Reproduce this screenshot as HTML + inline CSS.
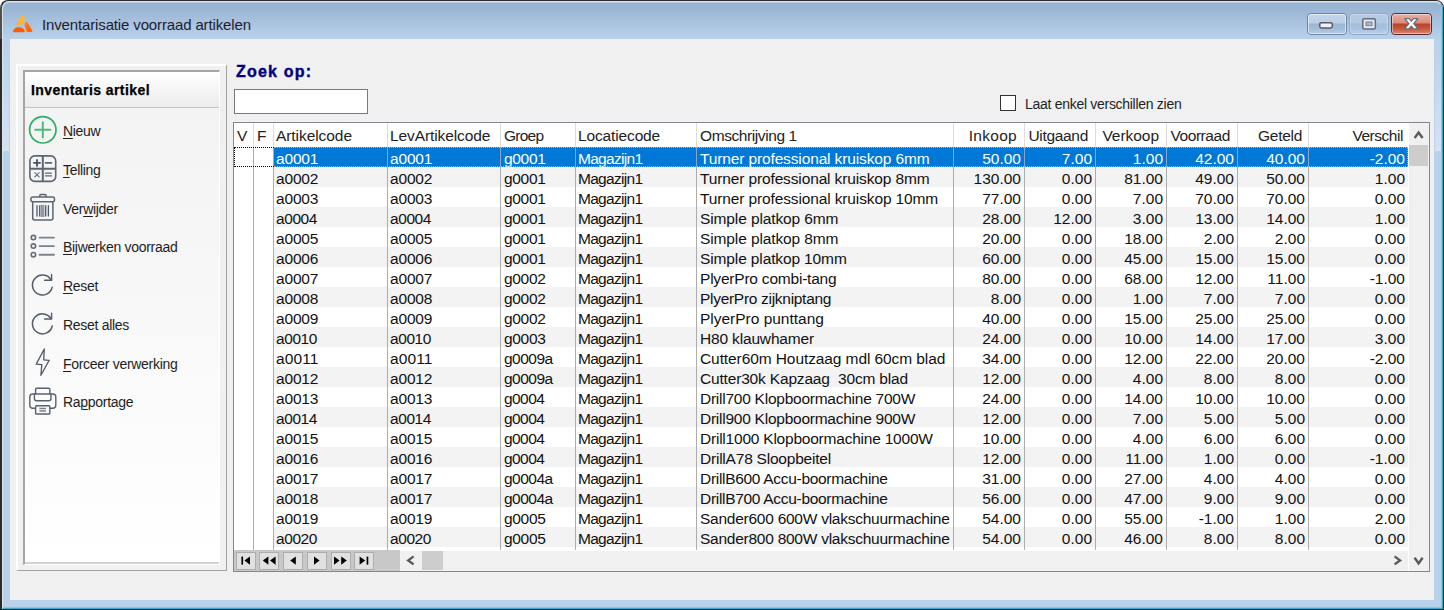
<!DOCTYPE html>
<html><head><meta charset="utf-8">
<style>
*{box-sizing:border-box;margin:0;padding:0}
html,body{width:1444px;height:610px;overflow:hidden;background:#fff;font-family:"Liberation Sans",sans-serif;}
.abs{position:absolute}
#win{position:absolute;left:0;top:0;width:1444px;height:610px;border-radius:8px 8px 0 0;background:linear-gradient(90deg,#505050 0,#505050 2px,#2b2b2b 2px) 0 0/100% 39px no-repeat,#2b2b2b;overflow:hidden}
#frame{position:absolute;left:2px;top:1px;width:1441px;height:608px;border-radius:7px 7px 0 0;background:#b9d1ea;overflow:hidden}
#cap{position:absolute;left:0;top:0;width:1441px;height:38px;background:linear-gradient(#98b3d2 0,#9cb7d6 25%,#b9d1ea 100%)}
#hl{position:absolute;left:0;top:0;width:1441px;height:608px;box-shadow:inset 0 1px 0 rgba(255,255,255,.3),inset -1px -1px 0 #7acdea;border:1px solid #dbe6f1;border-right-color:#3aa9c9;border-bottom-color:#3aa9c9;border-radius:7px 7px 0 0;}
#title{position:absolute;left:40px;top:15px;font-size:15px;line-height:17px;color:#1c1c30;white-space:nowrap;letter-spacing:-0.14px}
#client{position:absolute;left:8px;top:38px;width:1424px;height:561px;background:#f0f0f0}
/* left panel  (client origin = page 10,39) */
#lp{position:absolute;left:6px;top:25px;width:211px;height:507px;border:2px solid #fff;border-right:1px solid #a0a0a0;border-bottom:1px solid #a0a0a0}
#lpi{position:absolute;left:13px;top:31px;width:197px;height:495px;border-top:2px solid #a6a6a6;border-left:2px solid #a6a6a6;border-right:1px solid #fff;border-bottom:1px solid #fff;background:linear-gradient(#f2f2f2 0,#fff 100%)}
#lpi:after{content:"";position:absolute;left:0;right:0;bottom:0;height:2px;background:#d2d2d2}
#lph{position:absolute;left:0;top:0;right:0;height:36px;background:linear-gradient(#fff,#ebebeb);border-bottom:1px solid #c4c4c4;font-weight:bold;font-size:14px;line-height:16px;padding:10px 0 0 6px;color:#000;white-space:nowrap;letter-spacing:0.43px;-webkit-text-stroke:0.25px #000}
.mi{position:absolute;left:40px;font-size:14px;line-height:16px;color:#1e1e1e;white-space:nowrap;letter-spacing:-0.3px}
u{text-decoration:underline;text-decoration-thickness:1px;text-underline-offset:1.5px}
/* search */
#zoek{position:absolute;left:226px;top:24px;-webkit-text-stroke:0.4px #000080;font-weight:bold;font-size:16px;line-height:18px;color:#000080;letter-spacing:1.2px;white-space:nowrap}
#inp{position:absolute;left:224px;top:50px;width:134px;height:25px;border:1px solid #7a7a7a;background:#fff}
#cb{position:absolute;left:990px;top:56px;width:16px;height:16px;border:1px solid #333;background:#fff}
#cbl{position:absolute;left:1015px;top:57px;font-size:14px;line-height:16px;color:#1e1e1e;white-space:nowrap;letter-spacing:-0.29px}
/* grid: page (233,122) -> client (223,83) */
#grid{position:absolute;left:223px;top:83px;width:1197px;height:450px;border:1px solid #828790;background:#fff;overflow:hidden}
#gi{position:absolute;left:-1px;top:-1px;width:1197px;height:450px}
.hc{position:absolute;top:1px;height:24px;font-size:15.5px;line-height:25px;padding:0 0 0 3px;color:#222;white-space:nowrap;overflow:hidden}
.hc.r{text-align:right;padding:0 7px 0 0}
.row{position:absolute;left:41px;width:1134px;height:20px;background:#fff}
.row.alt{background:#f3f3f3}
.row.sel{background:#0078d7}
.row.sel .c{color:#fff}
.c{position:absolute;top:0;height:20px;line-height:23px;font-size:15.5px;padding:0 0 0 3px;color:#111;white-space:nowrap;overflow:hidden}
.c.r{text-align:right;padding:0 3px 0 0}
.vl{position:absolute;top:25px;width:1px;height:403px;background:#adadad}
.vh{position:absolute;top:1px;width:1px;height:24px;background:#dcdcdc}
.vs{position:absolute;top:25px;width:1px;height:20px;background:#86a8c8}
</style></head><body>
<div id="win"><div id="frame">
<div id="cap"></div>
<div id="hl"></div>
<div class="abs" style="left:1px;top:38px;width:6px;height:112px;background:linear-gradient(#b9d1ea,#d4e3f3)"></div>
<div class="abs" style="left:1433px;top:38px;width:6px;height:112px;background:linear-gradient(#b9d1ea,#d4e3f3)"></div>
<svg class="abs" style="left:0;top:0" width="40" height="38" viewBox="2 1 40 38">
 <defs>
  <linearGradient id="gy" x1="0" y1="0" x2="0" y2="1"><stop offset="0" stop-color="#fdbb33"/><stop offset="1" stop-color="#fdb02e"/></linearGradient>
  <linearGradient id="go" x1="0" y1="0" x2="1" y2="1"><stop offset="0" stop-color="#ff8a3c"/><stop offset="0.5" stop-color="#ff6a05"/><stop offset="1" stop-color="#ff6a05"/></linearGradient>
 </defs>
 <path d="M21.2 16.2Q22.6 14.6 24 16L24.9 18.6L22.9 24.1Q20 25.6 16.9 25.1Q16.2 24.6 16.6 23.8Z" fill="url(#gy)"/>
 <path d="M24.4 24.4Q24.6 22.2 26.2 21.8Q27 21.8 27.6 22.8L32.4 30.6Q32.6 31.8 31.4 32H27.6Q26.6 31.8 26.2 30.8Z" fill="url(#go)"/>
 <path d="M13 31.2Q13.6 28.2 17.4 27.3Q21.8 26.6 24 29.2L24.9 31.2Q25 32.2 24 32.2H13.8Q12.8 32.2 13 31.2Z" fill="#ff5c02"/>
</svg>

<div id="title">Inventarisatie voorraad artikelen</div>
<style>
.cb{position:absolute;top:12px;height:22px;border-radius:4px;border:1px solid #6f85a3;}
.cb i{position:absolute;left:0;top:0;right:0;bottom:0;border-radius:3px;border:1px solid rgba(255,255,255,.55)}
#bmin{left:1305px;width:40px;background:linear-gradient(#c3d5e9 0,#bccfe6 45%,#9bb5d2 50%,#a3bcd9 75%,#b6cde7 100%)}
#bmax{left:1347px;width:40px;border-color:#90a8c6;background:linear-gradient(#b6cbe4 0,#b2c8e2 45%,#a3bddb 50%,#a9c2df 75%,#b7cfe9 100%)}
#bmax i{border-color:rgba(255,255,255,.28)}
#bcls{left:1389px;width:41px;border-color:#5a2832;background:linear-gradient(#eab0a3 0,#d98b7a 45%,#bf4228 50%,#c4523a 70%,#d98670 100%)}
#bcls i{border-color:rgba(255,255,255,.45)}
</style>
<div class="cb" id="bmin"><i></i><svg class="abs" style="left:11px;top:8px" width="16" height="8"><rect x="0.75" y="0.75" width="12.5" height="5.2" rx="1.6" fill="#f2f2f2" stroke="#535b6e" stroke-width="1.5"/></svg></div>
<div class="cb" id="bmax"><i></i><svg class="abs" style="left:12px;top:4px" width="16" height="14"><rect x="0.75" y="0.75" width="12.6" height="10.2" rx="1.5" fill="#e6e6e6" stroke="#626b80" stroke-width="1.5"/><rect x="4" y="4" width="6" height="3.6" fill="#9fb7d6" stroke="#7a849a" stroke-width="1"/></svg></div>
<div class="cb" id="bcls"><i></i><svg class="abs" style="left:11px;top:3px" width="18" height="14" viewBox="0 0 18 14"><path d="M1.8 1.6H6.2L8.3 4.2L10.4 1.6H14.8L10.7 6.6L15 11.9H10.6L8.3 9.1L6 11.9H1.6L5.9 6.6Z" fill="#fff" stroke="#6a6f7c" stroke-width="1.3" stroke-linejoin="round"/></svg></div>

<div id="client">
 <div id="lp"></div>
 <div id="lpi">
   <div id="lph">Inventaris artikel</div>
 </div>
<svg class="abs" style="left:0;top:0" width="230" height="450" viewBox="10 39 230 450" fill="none" stroke-linecap="round" stroke-linejoin="round">
 <!-- Nieuw -->
 <g stroke="#2fae66">
  <circle cx="42.8" cy="129.8" r="13.2" stroke-width="1.7"/>
  <path d="M35.2 129.8H50.4M42.8 122.2V137.4" stroke-width="2" stroke="#4dba7e"/>
 </g>
 <!-- Telling -->
 <g stroke="#5c6573" stroke-width="1.6">
  <rect x="29.9" y="155.9" width="25.8" height="25.5" rx="5"/>
  <path d="M42.8 156V181.2M30 168.7H55.6" stroke-width="2" stroke-linecap="butt"/>
  <path d="M34 162.9H40M37 159.9V165.9" stroke-width="1.8" stroke="#4a5260"/>
  <path d="M45.5 162.9H51.5" stroke-width="1.6"/>
  <path d="M34.8 172.6L39.2 177M39.2 172.6L34.8 177" stroke-width="1.1" stroke="#6d7582"/>
  <path d="M45.5 173.1H51.5M45.5 175.9H51.5" stroke-width="1.4"/>
 </g>
 <!-- Verwijder -->
 <g stroke="#5c6573" stroke-width="1.5">
  <path d="M39.8 196.5V195.5Q39.8 194.5 40.8 194.5H45Q46 194.5 46 195.5V196.5"/>
  <rect x="30.9" y="196.9" width="23.6" height="4.8" rx="2"/>
  <path d="M32.7 202V218Q32.7 220 34.7 220H50.9Q52.9 220 52.9 218V202"/>
  <path d="M37 205.2V216.6M39.7 205.2V216.6M45.7 205.2V216.6M48.4 205.2V216.6" stroke-width="1.3" stroke="#4f5866" stroke-linecap="butt"/>
  <rect x="40.6" y="204.8" width="3.8" height="12.2" fill="#949aa3" stroke="none"/>
 </g>
 <!-- Bijwerken -->
 <g stroke="#656d7a" stroke-width="1.6">
  <circle cx="33.4" cy="237.6" r="2.2"/><circle cx="33.4" cy="246.1" r="2.2"/><circle cx="33.4" cy="254.7" r="2.2"/>
  <path d="M39.6 237.6H54M39.6 246.1H54M39.6 254.7H54" stroke-width="1.9" stroke="#7a828e"/>
 </g>
 <!-- Reset -->
 <g stroke="#535c6a" stroke-width="1.5">
  <path d="M51 279.9A10 10 0 1 0 52.2 287.2"/>
  <path d="M51.6 274.4V280.2H44.6" stroke-width="1.4"/>
 </g>
 <g stroke="#535c6a" stroke-width="1.5" transform="translate(0 38.8)">
  <path d="M51 279.9A10 10 0 1 0 52.2 287.2"/>
  <path d="M51.6 274.4V280.2H44.6" stroke-width="1.4"/>
 </g>
 <!-- Forceer -->
 <path d="M44.3 349L36.2 364.1L41.8 364.6L40.9 375.3L49.2 360.3L43.7 359.8Z" stroke="#4f5866" stroke-width="1.3"/>
 <!-- Rapportage -->
 <g stroke="#596270" stroke-width="1.4">
  <path d="M35.6 393.8V389.2Q35.6 388.2 36.6 388.2H48.8Q49.8 388.2 49.8 389.2V393.8"/>
  <path d="M35.2 408.2H32.8Q29.8 408.2 29.8 405.2V397Q29.8 394 32.8 394H52.8Q55.8 394 55.8 397V405.2Q55.8 408.2 52.8 408.2H50.2"/>
  <path d="M34.4 394V398.6Q34.4 400.8 36.6 400.8H48.8Q51 400.8 51 398.6V394"/>
  <rect x="35.6" y="405.8" width="14.2" height="8.2" rx="0.8"/>
  <path d="M39.4 408.4H46M39.4 411H46" stroke-width="1.5" stroke="#7a828e" stroke-linecap="butt"/>
 </g>
</svg>
<div class="mi" style="left:53px;top:84px"><u>N</u>ieuw</div>
<div class="mi" style="left:53px;top:123px"><u>T</u>elling</div>
<div class="mi" style="left:53px;top:162px">Ver<u>w</u>ijder</div>
<div class="mi" style="left:53px;top:200px"><u>B</u>ijwerken voorraad</div>
<div class="mi" style="left:53px;top:239px"><u>R</u>eset</div>
<div class="mi" style="left:53px;top:278px">Reset alles</div>
<div class="mi" style="left:53px;top:317px"><u>F</u>orceer verwerking</div>
<div class="mi" style="left:53px;top:355px">Ra<u>p</u>portage</div>

 <div id="zoek">Zoek op:</div>
 <div id="inp"></div>
 <div id="cb"></div><div id="cbl">Laat enkel verschillen zien</div>
 <div id="grid"><div id="gi">
<div class="hc" style="left:1px;width:19px">V</div>
<div class="hc" style="left:21px;width:19px">F</div>
<div class="hc l" style="left:41px;width:113px;letter-spacing:-0.065px;padding-left:2px">Artikelcode</div>
<div class="hc l" style="left:155px;width:112px;letter-spacing:-0.103px;padding-left:2px">LevArtikelcode</div>
<div class="hc l" style="left:268px;width:74px;letter-spacing:-0.765px">Groep</div>
<div class="hc l" style="left:343px;width:120px;letter-spacing:-0.137px;padding-left:2px">Locatiecode</div>
<div class="hc l" style="left:464px;width:256px;letter-spacing:-0.414px">Omschrijving 1</div>
<div class="hc r" style="left:721px;width:70px;letter-spacing:0.297px">Inkoop</div>
<div class="hc r" style="left:792px;width:70px;letter-spacing:-0.304px">Uitgaand</div>
<div class="hc r" style="left:863px;width:70px;letter-spacing:-0.043px">Verkoop</div>
<div class="hc r" style="left:934px;width:70px;letter-spacing:-0.413px">Voorraad</div>
<div class="hc r" style="left:1005px;width:70px;padding-right:6px;letter-spacing:-0.289px">Geteld</div>
<div class="hc r" style="left:1076px;width:99px;padding-right:5px;letter-spacing:-0.461px">Verschil</div>
<div class="row sel" style="top:25px"><div class="c l" style="left:0px;width:113px;letter-spacing:-0.17px;padding-left:2px">a0001</div><div class="c l" style="left:114px;width:112px;letter-spacing:-0.17px;padding-left:2px">a0001</div><div class="c l" style="left:227px;width:74px;letter-spacing:-0.32px">g0001</div><div class="c l" style="left:302px;width:120px;letter-spacing:-0.704px;padding-left:2px">Magazijn1</div><div class="c l" style="left:423px;width:256px;letter-spacing:-0.133px">Turner professional kruiskop 6mm</div><div class="c r" style="left:680px;width:70px">50.00</div><div class="c r" style="left:751px;width:70px">7.00</div><div class="c r" style="left:822px;width:70px">1.00</div><div class="c r" style="left:893px;width:70px">42.00</div><div class="c r" style="left:964px;width:70px">40.00</div><div class="c r" style="left:1035px;width:99px">-2.00</div></div>
<div class="row alt" style="top:45px"><div class="c l" style="left:0px;width:113px;letter-spacing:-0.17px;padding-left:2px">a0002</div><div class="c l" style="left:114px;width:112px;letter-spacing:-0.17px;padding-left:2px">a0002</div><div class="c l" style="left:227px;width:74px;letter-spacing:-0.32px">g0001</div><div class="c l" style="left:302px;width:120px;letter-spacing:-0.704px;padding-left:2px">Magazijn1</div><div class="c l" style="left:423px;width:256px;letter-spacing:-0.133px">Turner professional kruiskop 8mm</div><div class="c r" style="left:680px;width:70px">130.00</div><div class="c r" style="left:751px;width:70px">0.00</div><div class="c r" style="left:822px;width:70px">81.00</div><div class="c r" style="left:893px;width:70px">49.00</div><div class="c r" style="left:964px;width:70px">50.00</div><div class="c r" style="left:1035px;width:99px">1.00</div></div>
<div class="row" style="top:65px"><div class="c l" style="left:0px;width:113px;letter-spacing:-0.17px;padding-left:2px">a0003</div><div class="c l" style="left:114px;width:112px;letter-spacing:-0.17px;padding-left:2px">a0003</div><div class="c l" style="left:227px;width:74px;letter-spacing:-0.32px">g0001</div><div class="c l" style="left:302px;width:120px;letter-spacing:-0.704px;padding-left:2px">Magazijn1</div><div class="c l" style="left:423px;width:256px;letter-spacing:-0.129px">Turner professional kruiskop 10mm</div><div class="c r" style="left:680px;width:70px">77.00</div><div class="c r" style="left:751px;width:70px">0.00</div><div class="c r" style="left:822px;width:70px">7.00</div><div class="c r" style="left:893px;width:70px">70.00</div><div class="c r" style="left:964px;width:70px">70.00</div><div class="c r" style="left:1035px;width:99px">0.00</div></div>
<div class="row alt" style="top:85px"><div class="c l" style="left:0px;width:113px;letter-spacing:-0.42px;padding-left:2px">a0004</div><div class="c l" style="left:114px;width:112px;letter-spacing:-0.42px;padding-left:2px">a0004</div><div class="c l" style="left:227px;width:74px;letter-spacing:-0.32px">g0001</div><div class="c l" style="left:302px;width:120px;letter-spacing:-0.704px;padding-left:2px">Magazijn1</div><div class="c l" style="left:423px;width:256px;letter-spacing:-0.112px">Simple platkop 6mm</div><div class="c r" style="left:680px;width:70px">28.00</div><div class="c r" style="left:751px;width:70px">12.00</div><div class="c r" style="left:822px;width:70px">3.00</div><div class="c r" style="left:893px;width:70px">13.00</div><div class="c r" style="left:964px;width:70px">14.00</div><div class="c r" style="left:1035px;width:99px">1.00</div></div>
<div class="row" style="top:105px"><div class="c l" style="left:0px;width:113px;letter-spacing:-0.17px;padding-left:2px">a0005</div><div class="c l" style="left:114px;width:112px;letter-spacing:-0.17px;padding-left:2px">a0005</div><div class="c l" style="left:227px;width:74px;letter-spacing:-0.32px">g0001</div><div class="c l" style="left:302px;width:120px;letter-spacing:-0.704px;padding-left:2px">Magazijn1</div><div class="c l" style="left:423px;width:256px;letter-spacing:-0.112px">Simple platkop 8mm</div><div class="c r" style="left:680px;width:70px">20.00</div><div class="c r" style="left:751px;width:70px">0.00</div><div class="c r" style="left:822px;width:70px">18.00</div><div class="c r" style="left:893px;width:70px">2.00</div><div class="c r" style="left:964px;width:70px">2.00</div><div class="c r" style="left:1035px;width:99px">0.00</div></div>
<div class="row alt" style="top:125px"><div class="c l" style="left:0px;width:113px;letter-spacing:-0.17px;padding-left:2px">a0006</div><div class="c l" style="left:114px;width:112px;letter-spacing:-0.17px;padding-left:2px">a0006</div><div class="c l" style="left:227px;width:74px;letter-spacing:-0.32px">g0001</div><div class="c l" style="left:302px;width:120px;letter-spacing:-0.704px;padding-left:2px">Magazijn1</div><div class="c l" style="left:423px;width:256px;letter-spacing:-0.124px">Simple platkop 10mm</div><div class="c r" style="left:680px;width:70px">60.00</div><div class="c r" style="left:751px;width:70px">0.00</div><div class="c r" style="left:822px;width:70px">45.00</div><div class="c r" style="left:893px;width:70px">15.00</div><div class="c r" style="left:964px;width:70px">15.00</div><div class="c r" style="left:1035px;width:99px">0.00</div></div>
<div class="row" style="top:145px"><div class="c l" style="left:0px;width:113px;letter-spacing:-0.17px;padding-left:2px">a0007</div><div class="c l" style="left:114px;width:112px;letter-spacing:-0.17px;padding-left:2px">a0007</div><div class="c l" style="left:227px;width:74px;letter-spacing:-0.32px">g0002</div><div class="c l" style="left:302px;width:120px;letter-spacing:-0.704px;padding-left:2px">Magazijn1</div><div class="c l" style="left:423px;width:256px;letter-spacing:-0.211px">PlyerPro combi-tang</div><div class="c r" style="left:680px;width:70px">80.00</div><div class="c r" style="left:751px;width:70px">0.00</div><div class="c r" style="left:822px;width:70px">68.00</div><div class="c r" style="left:893px;width:70px">12.00</div><div class="c r" style="left:964px;width:70px">11.00</div><div class="c r" style="left:1035px;width:99px">-1.00</div></div>
<div class="row alt" style="top:165px"><div class="c l" style="left:0px;width:113px;letter-spacing:-0.17px;padding-left:2px">a0008</div><div class="c l" style="left:114px;width:112px;letter-spacing:-0.17px;padding-left:2px">a0008</div><div class="c l" style="left:227px;width:74px;letter-spacing:-0.32px">g0002</div><div class="c l" style="left:302px;width:120px;letter-spacing:-0.704px;padding-left:2px">Magazijn1</div><div class="c l" style="left:423px;width:256px;letter-spacing:-0.293px">PlyerPro zijkniptang</div><div class="c r" style="left:680px;width:70px">8.00</div><div class="c r" style="left:751px;width:70px">0.00</div><div class="c r" style="left:822px;width:70px">1.00</div><div class="c r" style="left:893px;width:70px">7.00</div><div class="c r" style="left:964px;width:70px">7.00</div><div class="c r" style="left:1035px;width:99px">0.00</div></div>
<div class="row" style="top:185px"><div class="c l" style="left:0px;width:113px;letter-spacing:-0.17px;padding-left:2px">a0009</div><div class="c l" style="left:114px;width:112px;letter-spacing:-0.17px;padding-left:2px">a0009</div><div class="c l" style="left:227px;width:74px;letter-spacing:-0.32px">g0002</div><div class="c l" style="left:302px;width:120px;letter-spacing:-0.704px;padding-left:2px">Magazijn1</div><div class="c l" style="left:423px;width:256px;letter-spacing:-0.01px">PlyerPro punttang</div><div class="c r" style="left:680px;width:70px">40.00</div><div class="c r" style="left:751px;width:70px">0.00</div><div class="c r" style="left:822px;width:70px">15.00</div><div class="c r" style="left:893px;width:70px">25.00</div><div class="c r" style="left:964px;width:70px">25.00</div><div class="c r" style="left:1035px;width:99px">0.00</div></div>
<div class="row alt" style="top:205px"><div class="c l" style="left:0px;width:113px;letter-spacing:-0.42px;padding-left:2px">a0010</div><div class="c l" style="left:114px;width:112px;letter-spacing:-0.42px;padding-left:2px">a0010</div><div class="c l" style="left:227px;width:74px;letter-spacing:-0.32px">g0003</div><div class="c l" style="left:302px;width:120px;letter-spacing:-0.704px;padding-left:2px">Magazijn1</div><div class="c l" style="left:423px;width:256px;letter-spacing:-0.165px">H80 klauwhamer</div><div class="c r" style="left:680px;width:70px">24.00</div><div class="c r" style="left:751px;width:70px">0.00</div><div class="c r" style="left:822px;width:70px">10.00</div><div class="c r" style="left:893px;width:70px">14.00</div><div class="c r" style="left:964px;width:70px">17.00</div><div class="c r" style="left:1035px;width:99px">3.00</div></div>
<div class="row" style="top:225px"><div class="c l" style="left:0px;width:113px;letter-spacing:0.117px;padding-left:2px">a0011</div><div class="c l" style="left:114px;width:112px;letter-spacing:0.117px;padding-left:2px">a0011</div><div class="c l" style="left:227px;width:74px;letter-spacing:-0.52px">g0009a</div><div class="c l" style="left:302px;width:120px;letter-spacing:-0.704px;padding-left:2px">Magazijn1</div><div class="c l" style="left:423px;width:256px;letter-spacing:-0.09px">Cutter60m Houtzaag mdl 60cm blad</div><div class="c r" style="left:680px;width:70px">34.00</div><div class="c r" style="left:751px;width:70px">0.00</div><div class="c r" style="left:822px;width:70px">12.00</div><div class="c r" style="left:893px;width:70px">22.00</div><div class="c r" style="left:964px;width:70px">20.00</div><div class="c r" style="left:1035px;width:99px">-2.00</div></div>
<div class="row alt" style="top:245px"><div class="c l" style="left:0px;width:113px;letter-spacing:-0.17px;padding-left:2px">a0012</div><div class="c l" style="left:114px;width:112px;letter-spacing:-0.17px;padding-left:2px">a0012</div><div class="c l" style="left:227px;width:74px;letter-spacing:-0.52px">g0009a</div><div class="c l" style="left:302px;width:120px;letter-spacing:-0.704px;padding-left:2px">Magazijn1</div><div class="c l" style="left:423px;width:256px;letter-spacing:-0.174px">Cutter30k Kapzaag&nbsp; 30cm blad</div><div class="c r" style="left:680px;width:70px">12.00</div><div class="c r" style="left:751px;width:70px">0.00</div><div class="c r" style="left:822px;width:70px">4.00</div><div class="c r" style="left:893px;width:70px">8.00</div><div class="c r" style="left:964px;width:70px">8.00</div><div class="c r" style="left:1035px;width:99px">0.00</div></div>
<div class="row" style="top:265px"><div class="c l" style="left:0px;width:113px;letter-spacing:-0.17px;padding-left:2px">a0013</div><div class="c l" style="left:114px;width:112px;letter-spacing:-0.17px;padding-left:2px">a0013</div><div class="c l" style="left:227px;width:74px;letter-spacing:-0.57px">g0004</div><div class="c l" style="left:302px;width:120px;letter-spacing:-0.704px;padding-left:2px">Magazijn1</div><div class="c l" style="left:423px;width:256px;letter-spacing:-0.248px">Drill700 Klopboormachine 700W</div><div class="c r" style="left:680px;width:70px">24.00</div><div class="c r" style="left:751px;width:70px">0.00</div><div class="c r" style="left:822px;width:70px">14.00</div><div class="c r" style="left:893px;width:70px">10.00</div><div class="c r" style="left:964px;width:70px">10.00</div><div class="c r" style="left:1035px;width:99px">0.00</div></div>
<div class="row alt" style="top:285px"><div class="c l" style="left:0px;width:113px;letter-spacing:-0.42px;padding-left:2px">a0014</div><div class="c l" style="left:114px;width:112px;letter-spacing:-0.42px;padding-left:2px">a0014</div><div class="c l" style="left:227px;width:74px;letter-spacing:-0.57px">g0004</div><div class="c l" style="left:302px;width:120px;letter-spacing:-0.704px;padding-left:2px">Magazijn1</div><div class="c l" style="left:423px;width:256px;letter-spacing:-0.248px">Drill900 Klopboormachine 900W</div><div class="c r" style="left:680px;width:70px">12.00</div><div class="c r" style="left:751px;width:70px">0.00</div><div class="c r" style="left:822px;width:70px">7.00</div><div class="c r" style="left:893px;width:70px">5.00</div><div class="c r" style="left:964px;width:70px">5.00</div><div class="c r" style="left:1035px;width:99px">0.00</div></div>
<div class="row" style="top:305px"><div class="c l" style="left:0px;width:113px;letter-spacing:-0.17px;padding-left:2px">a0015</div><div class="c l" style="left:114px;width:112px;letter-spacing:-0.17px;padding-left:2px">a0015</div><div class="c l" style="left:227px;width:74px;letter-spacing:-0.57px">g0004</div><div class="c l" style="left:302px;width:120px;letter-spacing:-0.704px;padding-left:2px">Magazijn1</div><div class="c l" style="left:423px;width:256px;letter-spacing:-0.22px">Drill1000 Klopboormachine 1000W</div><div class="c r" style="left:680px;width:70px">10.00</div><div class="c r" style="left:751px;width:70px">0.00</div><div class="c r" style="left:822px;width:70px">4.00</div><div class="c r" style="left:893px;width:70px">6.00</div><div class="c r" style="left:964px;width:70px">6.00</div><div class="c r" style="left:1035px;width:99px">0.00</div></div>
<div class="row alt" style="top:325px"><div class="c l" style="left:0px;width:113px;letter-spacing:-0.17px;padding-left:2px">a0016</div><div class="c l" style="left:114px;width:112px;letter-spacing:-0.17px;padding-left:2px">a0016</div><div class="c l" style="left:227px;width:74px;letter-spacing:-0.57px">g0004</div><div class="c l" style="left:302px;width:120px;letter-spacing:-0.704px;padding-left:2px">Magazijn1</div><div class="c l" style="left:423px;width:256px;letter-spacing:-0.217px">DrillA78 Sloopbeitel</div><div class="c r" style="left:680px;width:70px">12.00</div><div class="c r" style="left:751px;width:70px">0.00</div><div class="c r" style="left:822px;width:70px">11.00</div><div class="c r" style="left:893px;width:70px">1.00</div><div class="c r" style="left:964px;width:70px">0.00</div><div class="c r" style="left:1035px;width:99px">-1.00</div></div>
<div class="row" style="top:345px"><div class="c l" style="left:0px;width:113px;letter-spacing:-0.17px;padding-left:2px">a0017</div><div class="c l" style="left:114px;width:112px;letter-spacing:-0.17px;padding-left:2px">a0017</div><div class="c l" style="left:227px;width:74px;letter-spacing:-0.52px">g0004a</div><div class="c l" style="left:302px;width:120px;letter-spacing:-0.704px;padding-left:2px">Magazijn1</div><div class="c l" style="left:423px;width:256px;letter-spacing:-0.304px">DrillB600 Accu-boormachine</div><div class="c r" style="left:680px;width:70px">31.00</div><div class="c r" style="left:751px;width:70px">0.00</div><div class="c r" style="left:822px;width:70px">27.00</div><div class="c r" style="left:893px;width:70px">4.00</div><div class="c r" style="left:964px;width:70px">4.00</div><div class="c r" style="left:1035px;width:99px">0.00</div></div>
<div class="row alt" style="top:365px"><div class="c l" style="left:0px;width:113px;letter-spacing:-0.17px;padding-left:2px">a0018</div><div class="c l" style="left:114px;width:112px;letter-spacing:-0.17px;padding-left:2px">a0017</div><div class="c l" style="left:227px;width:74px;letter-spacing:-0.52px">g0004a</div><div class="c l" style="left:302px;width:120px;letter-spacing:-0.704px;padding-left:2px">Magazijn1</div><div class="c l" style="left:423px;width:256px;letter-spacing:-0.304px">DrillB700 Accu-boormachine</div><div class="c r" style="left:680px;width:70px">56.00</div><div class="c r" style="left:751px;width:70px">0.00</div><div class="c r" style="left:822px;width:70px">47.00</div><div class="c r" style="left:893px;width:70px">9.00</div><div class="c r" style="left:964px;width:70px">9.00</div><div class="c r" style="left:1035px;width:99px">0.00</div></div>
<div class="row" style="top:385px"><div class="c l" style="left:0px;width:113px;letter-spacing:-0.17px;padding-left:2px">a0019</div><div class="c l" style="left:114px;width:112px;letter-spacing:-0.17px;padding-left:2px">a0019</div><div class="c l" style="left:227px;width:74px;letter-spacing:-0.32px">g0005</div><div class="c l" style="left:302px;width:120px;letter-spacing:-0.704px;padding-left:2px">Magazijn1</div><div class="c l" style="left:423px;width:256px;letter-spacing:-0.252px">Sander600 600W vlakschuurmachine</div><div class="c r" style="left:680px;width:70px">54.00</div><div class="c r" style="left:751px;width:70px">0.00</div><div class="c r" style="left:822px;width:70px">55.00</div><div class="c r" style="left:893px;width:70px">-1.00</div><div class="c r" style="left:964px;width:70px">1.00</div><div class="c r" style="left:1035px;width:99px">2.00</div></div>
<div class="row alt" style="top:405px"><div class="c l" style="left:0px;width:113px;letter-spacing:-0.42px;padding-left:2px">a0020</div><div class="c l" style="left:114px;width:112px;letter-spacing:-0.42px;padding-left:2px">a0020</div><div class="c l" style="left:227px;width:74px;letter-spacing:-0.32px">g0005</div><div class="c l" style="left:302px;width:120px;letter-spacing:-0.704px;padding-left:2px">Magazijn1</div><div class="c l" style="left:423px;width:256px;letter-spacing:-0.252px">Sander800 800W vlakschuurmachine</div><div class="c r" style="left:680px;width:70px">54.00</div><div class="c r" style="left:751px;width:70px">0.00</div><div class="c r" style="left:822px;width:70px">46.00</div><div class="c r" style="left:893px;width:70px">8.00</div><div class="c r" style="left:964px;width:70px">8.00</div><div class="c r" style="left:1035px;width:99px">0.00</div></div>
<div class="vl" style="left:20px"></div><div class="vh" style="left:20px"></div>
<div class="vl" style="left:40px"></div><div class="vh" style="left:40px"></div>
<div class="vl" style="left:154px"></div><div class="vh" style="left:154px"></div>
<div class="vl" style="left:267px"></div><div class="vh" style="left:267px"></div>
<div class="vl" style="left:342px"></div><div class="vh" style="left:342px"></div>
<div class="vl" style="left:463px"></div><div class="vh" style="left:463px"></div>
<div class="vl" style="left:720px"></div><div class="vh" style="left:720px"></div>
<div class="vl" style="left:791px"></div><div class="vh" style="left:791px"></div>
<div class="vl" style="left:862px"></div><div class="vh" style="left:862px"></div>
<div class="vl" style="left:933px"></div><div class="vh" style="left:933px"></div>
<div class="vl" style="left:1004px"></div><div class="vh" style="left:1004px"></div>
<div class="vl" style="left:1075px"></div><div class="vh" style="left:1075px"></div>
<div class="vs" style="left:154px"></div>
<div class="vs" style="left:267px"></div>
<div class="vs" style="left:342px"></div>
<div class="vs" style="left:463px"></div>
<div class="vs" style="left:720px"></div>
<div class="vs" style="left:791px"></div>
<div class="vs" style="left:862px"></div>
<div class="vs" style="left:933px"></div>
<div class="vs" style="left:1004px"></div>
<div class="vs" style="left:1075px"></div>
<!-- focus rect on first row: page y 147..166 ; x 234..1407 -->
<div class="abs" style="left:1px;top:25px;width:40px;height:20px;border:1px dotted #000;border-right:0"></div>
<div class="abs" style="left:41px;top:25px;width:1134px;height:20px;border:1px dotted #f5a050;border-left:0"></div>

<!-- gi coords = page-(233,122). nav: page x 234..399, y 550..570 -->
<div class="abs" style="left:1px;top:428px;width:166px;height:21px;background:#c8c8c8"></div>
<style>.nb{position:absolute;top:430px;width:20px;height:18px;background:#e1e1e1;border:1px solid #adadad}</style>
<div class="nb" style="left:3px"></div><div class="nb" style="left:26px"></div><div class="nb" style="left:50px"></div><div class="nb" style="left:74px"></div><div class="nb" style="left:98px"></div><div class="nb" style="left:121px"></div>
<svg class="abs" style="left:3px;top:430px" width="140" height="18" viewBox="236 552 140 18" fill="#000">
 <rect x="241.4" y="556.6" width="1.7" height="8"/><path d="M250 556.4V564.8L244.4 560.6Z"/>
 <path d="M268.4 556.4V564.8L262.8 560.6Z"/><path d="M275.6 556.4V564.8L270 560.6Z"/>
 <path d="M295.8 556.4V564.8L290.2 560.6Z"/>
 <path d="M314 556.4V564.8L319.6 560.6Z"/>
 <path d="M334 556.4V564.8L339.6 560.6Z"/><path d="M341.2 556.4V564.8L346.8 560.6Z"/>
 <path d="M359.6 556.4V564.8L365.2 560.6Z"/><rect x="366.6" y="556.6" width="1.7" height="8"/>
</svg>
<!-- h scrollbar: page x 400..1408, y 551..570 -->
<div class="abs" style="left:167px;top:429px;width:1008px;height:20px;background:#f0f0f0"></div>
<div class="abs" style="left:189px;top:429px;width:21px;height:19px;background:#cdcdcd"></div>
<svg class="abs" style="left:167px;top:429px" width="1009" height="20" viewBox="400 551 1009 20" fill="none" stroke="#5a5a5a" stroke-width="2.4"><path d="M413.6 556.4L408.2 560.4L413.6 564.4"/><path d="M1394.6 556.4L1400 560.4L1394.6 564.4"/></svg>
<!-- v scrollbar: page x 1409..1428, y 123..570 -->
<div class="abs" style="left:1176px;top:1px;width:20px;height:448px;background:#f0f0f0"></div>
<div class="abs" style="left:1176px;top:23px;width:19px;height:21px;background:#cdcdcd"></div>
<svg class="abs" style="left:1176px;top:1px" width="20" height="448" viewBox="1409 123 20 448" fill="none" stroke="#5a5a5a" stroke-width="2.4"><path d="M1414.6 138L1418.6 132.6L1422.6 138"/><path d="M1414.6 557.8L1418.6 563.4L1422.6 557.8"/></svg>

 </div></div>
</div>
</div></div>
</body></html>
